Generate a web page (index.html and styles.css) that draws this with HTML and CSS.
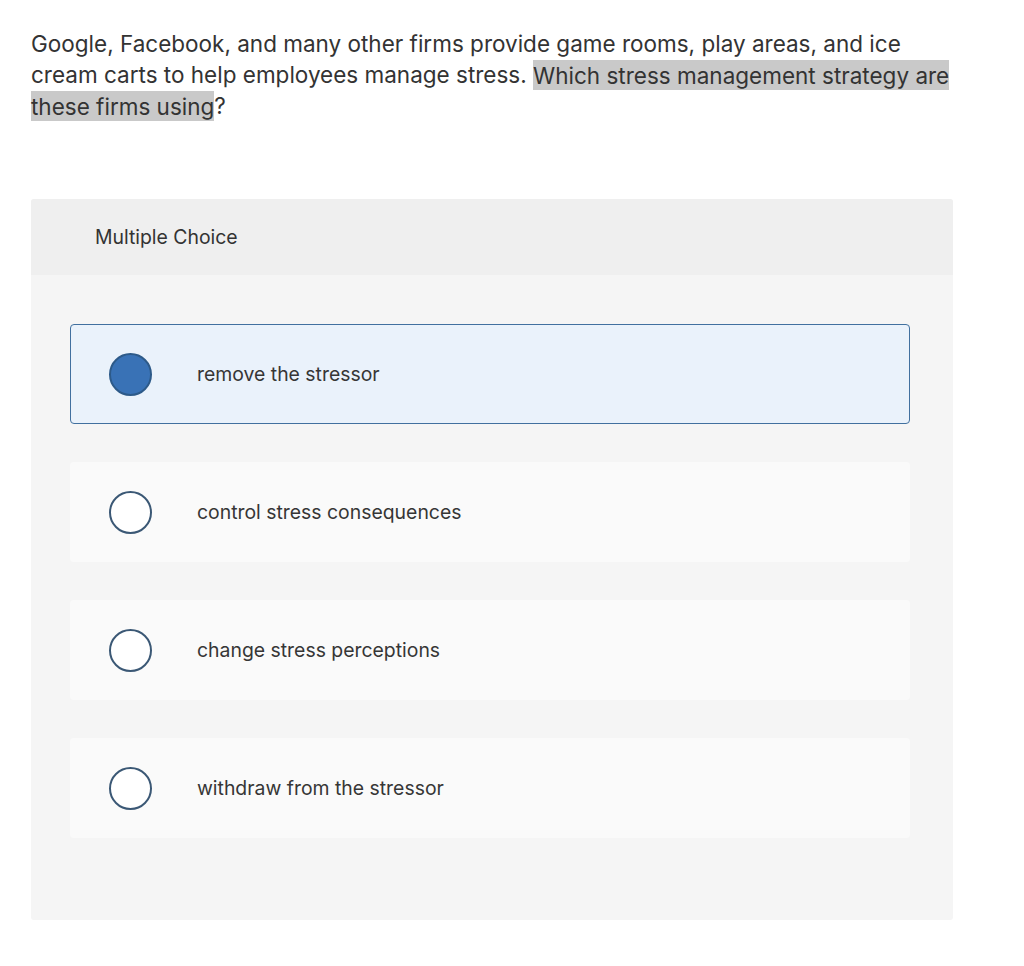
FILE: index.html
```html
<!DOCTYPE html>
<html lang="en">
<head>
<meta charset="utf-8">
<title>Multiple Choice</title>
<link rel="stylesheet" href="styles.css">
</head>
<body>
<main class="page">
  <p class="question"><span class="seg">Google, Facebook, and many other firms provide game rooms, play areas, and ice</span> <span class="seg">cream carts to help employees manage stress.</span> <span class="hl">Which stress management strategy are</span> <span class="hl">these firms using</span>?</p>
  <section class="card">
    <header class="card-head">Multiple Choice</header>
    <div class="card-body">
      <label class="option selected"><span class="radio"></span><span class="opt-text">remove the stressor</span></label>
      <label class="option"><span class="radio"></span><span class="opt-text">control stress consequences</span></label>
      <label class="option"><span class="radio"></span><span class="opt-text">change stress perceptions</span></label>
      <label class="option"><span class="radio"></span><span class="opt-text">withdraw from the stressor</span></label>
    </div>
  </section>
</main>
</body>
</html>
```
FILE: styles.css
```css
* { box-sizing: border-box; }
html, body { margin: 0; padding: 0; background: #fff; }
body {
  font-family: Inter, "Open Sans", sans-serif;
  color: #333;
}
.page {
  padding: 28px 0 0 31px;
}
.question {
  margin: 0;
  width: 935px;
  font-size: 22.5px;
  line-height: 31px;
  color: #333;
}
.hl {
  background: #c9c9c9;
  padding: 1.5px 0;
}
.card {
  margin-top: 78px;
  width: 922px;
  background: #f5f5f5;
  border-radius: 3px;
}
.card-head {
  height: 76px;
  display: flex;
  align-items: center;
  padding-left: 64px;
  background: #efefef;
  font-size: 19.4px;
  color: #333;
  border-radius: 3px 3px 0 0;
}
.card-body {
  display: flex;
  flex-direction: column;
  gap: 38px;
  padding: 49px 43px 82px 39px;
}
.option {
  height: 100px;
  display: flex;
  align-items: center;
  gap: 45px;
  padding-left: 38px;
  background: #fafafa;
  border: 1px solid transparent;
  border-radius: 4px;
  font-size: 19.4px;
  color: #363636;
}
.option.selected {
  background: #eaf2fb;
  border-color: #41709f;
}
.radio {
  width: 43px;
  height: 43px;
  flex: none;
  border-radius: 50%;
  border: 2px solid #3b5875;
  background: #fff;
}
.option.selected .radio {
  background: #3972b6;
  border-color: #2d5a89;
}
```
